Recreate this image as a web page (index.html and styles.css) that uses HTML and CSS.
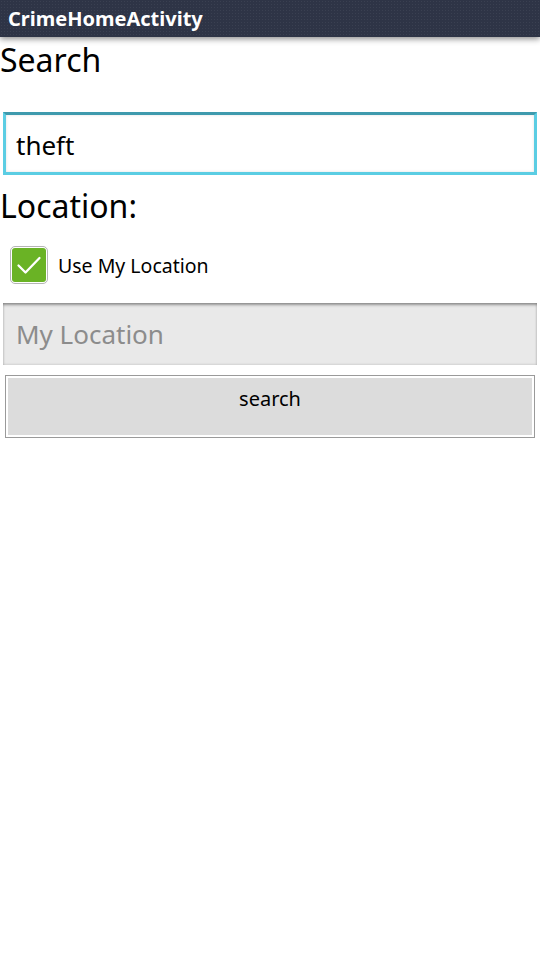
FILE: index.html
```html
<!DOCTYPE html>
<html>
<head>
<meta charset="utf-8">
<link rel="stylesheet" href="styles.css">
</head>
<body>
<div class="titlebar"><span class="title">CrimeHomeActivity</span></div>
<div class="content">
  <div class="heading heading-search">Search</div>
  <div class="edit edit-active"><span class="edit-text">theft</span></div>
  <div class="heading heading-loc">Location:</div>
  <div class="check-row">
    <span class="checkbox">
      <svg width="34" height="34" viewBox="0 0 34 34"><path d="M6.5 17.5 L13.5 24.5 L27.5 10" fill="none" stroke="#fff" stroke-width="2.3" stroke-linecap="round" stroke-linejoin="round"/></svg>
    </span>
    <span class="check-label">Use My Location</span>
  </div>
  <div class="edit edit-disabled"><span class="edit-hint">My Location</span></div>
  <div class="btn-wrap"><div class="btn">search</div></div>
</div>
</body>
</html>
```
FILE: styles.css
```css
html, body {
  margin: 0;
  padding: 0;
  background: #fff;
  font-family: "Noto Sans", "Open Sans", sans-serif;
}
.titlebar {
  height: 37px;
  background-color: #2e3446;
  background-image: radial-gradient(rgba(255,255,255,0.06) 1px, transparent 1px);
  background-size: 3px 3px;
  display: flex;
  align-items: center;
  padding-left: 8px;
  box-shadow: 0 2px 6px rgba(0,0,0,0.45);
  position: relative;
  z-index: 1;
}
.title {
  color: #fff;
  font-weight: bold;
  font-size: 20px;
  line-height: 1;
  padding-top: 1px;
}
.content {
  display: flex;
  flex-direction: column;
}
.heading {
  font-size: 32px;
  color: #000;
  line-height: 1;
}
.heading-search {
  margin-top: 7px;
}
.edit {
  margin: 36px 3px 0 3px;
  height: 63px;
  box-sizing: border-box;
  display: flex;
  align-items: center;
  padding-left: 10px;
  font-size: 26px;
}
.edit-active {
  border: 3px solid #5bcde3;
  border-top-color: #3e9aad;
  background: #fff;
  box-shadow: inset 0 0 3px rgba(0,0,0,0.12);
}
.edit-text {
  color: #000;
  padding-top: 2px;
}
.heading-loc {
  margin-top: 15px;
}
.check-row {
  display: flex;
  align-items: center;
  margin: 24px 0 0 10px;
  height: 38px;
}
.checkbox {
  width: 38px;
  height: 38px;
  box-sizing: border-box;
  border: 1px solid #b5b5b5;
  border-radius: 5px;
  background: #ffffff;
  padding: 1px;
  display: flex;
}
.checkbox svg {
  display: block;
  background: #6ab325;
  border-radius: 3px;
}
.check-label {
  font-size: 19.5px;
  margin-left: 10px;
  color: #000;
}
.edit-disabled {
  margin-top: 19px;
  height: 62px;
  padding-left: 13px;
  background: #e9e9e9;
  box-shadow: inset 0 3px 3px -1px rgba(0,0,0,0.35), inset 0 0 3px rgba(0,0,0,0.2);
}
.edit-hint {
  color: #8c8c8c;
}
.btn-wrap {
  margin: 10px 5px 0 5px;
  border: 1px solid #9a9a9a;
  padding: 2px;
  height: 63px;
  box-sizing: border-box;
}
.btn {
  background: #dcdcdc;
  height: 100%;
  text-align: center;
  font-size: 20px;
  color: #000;
  line-height: 1;
  padding-top: 11px;
  box-sizing: border-box;
}
```
